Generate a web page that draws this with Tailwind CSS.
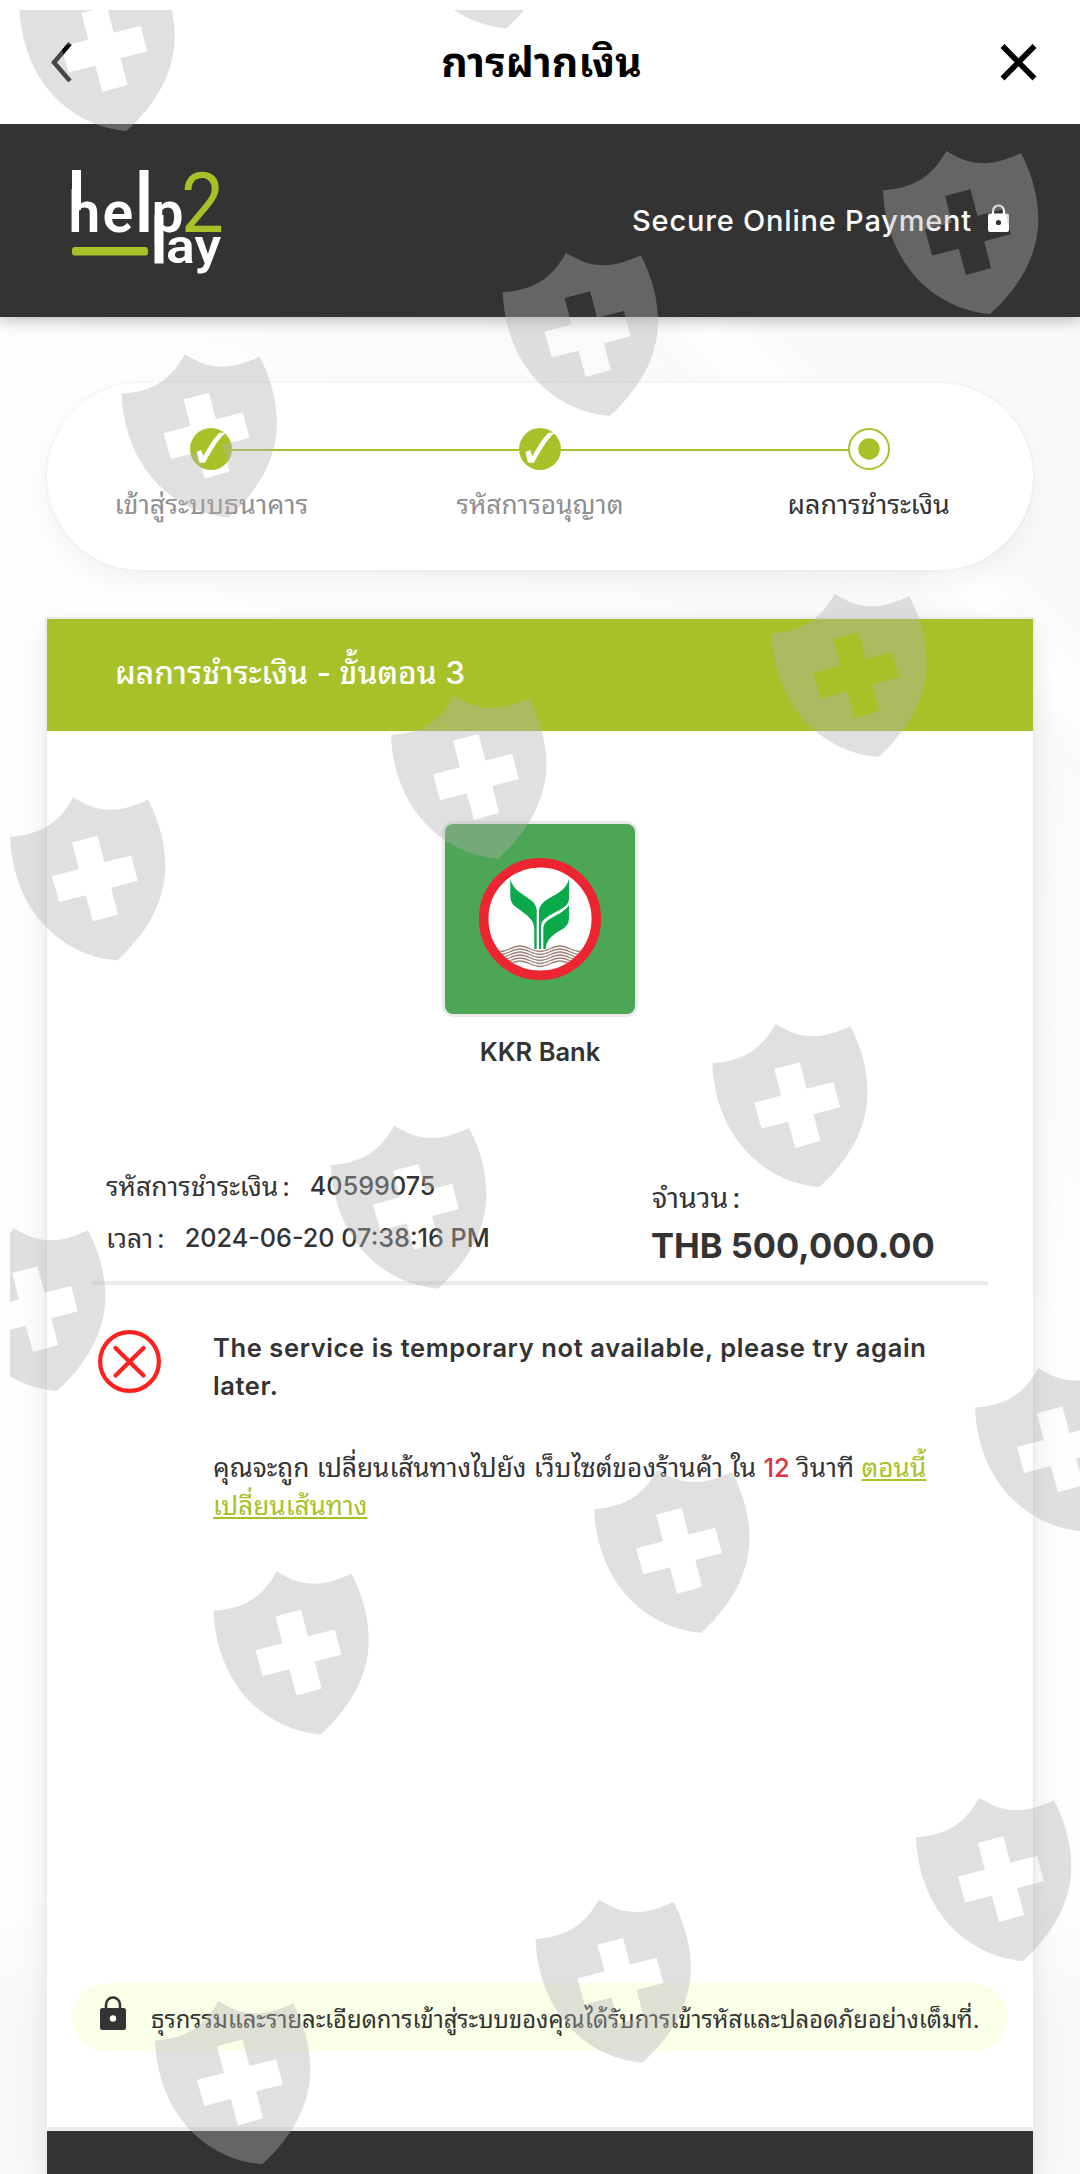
<!DOCTYPE html>
<html lang="th">
<head>
    <meta charset="UTF-8">
    <meta name="viewport" content="width=device-width, initial-scale=1.0">
    <title>การฝากเงิน</title>
    <!-- Tailwind CSS -->
    <script src="https://cdn.jsdelivr.net/npm/@tailwindcss/browser@4"></script>
</head>
<body class="relative w-[1080px] h-[2174px] overflow-hidden bg-[linear-gradient(to_bottom,transparent_87%,rgba(0,0,0,0.025)_93%),linear-gradient(45deg,#fefefe_0%,#fefefe_55%,#fafafa_76.5%,#ffffff_78.5%,#fafafa_80.5%)] font-['Inter','Noto_Sans_Thai_Looped','Noto_Looped_Thai','Noto_Sans_Thai','Noto_Sans',sans-serif] text-[#333333]">
    <!-- Title bar -->
    <header class="relative z-10 flex h-[124px] items-center justify-between bg-white pl-[50px] pr-[43px] text-black">
        <svg class="w-[22px] h-[40px]" viewBox="0 0 22 40" fill="none" stroke="#000" stroke-width="4.5"><path d="M20 1.5 4 20.5 20 39"/></svg>
        <h1 class="ml-[11px] text-[41px] leading-[48px] font-bold whitespace-nowrap">การฝากเงิน</h1>
        <svg class="w-[37px] h-[38px]" viewBox="0 0 37 38" fill="none" stroke="#000" stroke-width="5.5"><path d="M2.5 3 34.5 35.5M34.5 3 2.5 35.5"/></svg>
    </header>

    <!-- Brand bar -->
    <div class="relative flex h-[193px] items-center justify-between bg-[#333333] pl-[72px] pr-[71px] shadow-[0_4px_14px_rgba(0,0,0,0.25)]">
        <svg class="w-[150px] h-[112px] overflow-visible" viewBox="0 0 150 112" font-family="Roboto, sans-serif" fill="#fff">
            <text x="-3.500 30.500 64.500 79.500" y="67" font-size="57" font-weight="600">help</text>
            <rect x="0" y="5" width="9" height="40"/>
            <rect x="67.500" y="5" width="9" height="62"/>
            <rect x="82.500" y="50" width="9" height="48.500"/>
            <text x="109" y="67" font-size="84" fill="#a8c129" textLength="43" lengthAdjust="spacingAndGlyphs">2</text>
            <text x="94" y="98" font-size="48" font-weight="600" textLength="55" lengthAdjust="spacingAndGlyphs">ay</text>
            <rect x="0" y="82" width="76" height="8.500" rx="3" fill="#a8c129"/>
        </svg>
        <div class="flex items-center gap-[16px] text-white">
            <span class="text-[29px] font-medium tracking-[0.8px] whitespace-nowrap">Secure Online Payment</span>
            <svg class="-mt-1.5 w-[21px] h-[28px]" viewBox="0 0 21 28">
                <path d="M5 11V7a5.5 5.5 0 0 1 11 0v4" fill="none" stroke="#fff" stroke-width="2.2"/>
                <rect y="9.5" width="21" height="18.5" rx="2" fill="#fff"/>
                <circle cx="10.5" cy="18.5" r="2.6" fill="#333"/>
            </svg>
        </div>
    </div>

    <main class="px-[47px] pt-[66px]">
        <!-- Steps -->
        <div class="h-[187px] rounded-full bg-white px-16 pt-[45px] shadow-[0_0_0_2px_rgba(0,0,0,0.02),0_12px_28px_rgba(0,0,0,0.05)]">
            <div class="flex items-center px-[79px]">
                <svg class="w-[42px] h-[42px] shrink-0" viewBox="0 0 42 42">
                    <circle cx="21" cy="21" r="21" fill="#a8c129"/>
                    <path d="M6.500 24 11 22 13.500 28C19 18 25 8 30 4.700H35.500C27 13 20 25 15 34.700H9Z" fill="#fff"/>
                </svg>
                <div class="mt-0.5 h-0.5 flex-1 bg-[#a8c129]"></div>
                <svg class="w-[42px] h-[42px] shrink-0" viewBox="0 0 42 42">
                    <circle cx="21" cy="21" r="21" fill="#a8c129"/>
                    <path d="M6.500 24 11 22 13.500 28C19 18 25 8 30 4.700H35.500C27 13 20 25 15 34.700H9Z" fill="#fff"/>
                </svg>
                <div class="mt-0.5 h-0.5 flex-1 bg-[#a8c129]"></div>
                <svg class="w-[42px] h-[42px] shrink-0" viewBox="0 0 42 42">
                    <circle cx="21" cy="21" r="20" fill="#fff" stroke="#a8c129" stroke-width="2"/>
                    <circle cx="21" cy="21" r="10.700" fill="#a8c129"/>
                </svg>
            </div>
            <div class="-mx-16 mt-[16px] flex justify-center text-center text-[27px] leading-[38px] whitespace-nowrap text-[#8f8f8f]">
                <span class="w-[329px]">เข้าสู่ระบบธนาคาร</span>
                <span class="w-[329px] text-[26.3px]">รหัสการอนุญาต</span>
                <span class="w-[329px] text-[#333333]">ผลการชำระเงิน</span>
            </div>
        </div>

        <!-- Payment result -->
        <section class="mt-[49px] bg-white shadow-[0_0_0_2px_#ebebeb,0_8px_28px_rgba(0,0,0,0.1)]">
            <h2 class="flex h-[112px] items-center bg-[#a8c129] px-[68px] pb-1 text-[31.6px] font-medium whitespace-nowrap text-white">ผลการชำระเงิน - ขั้นตอน 3</h2>

            <div class="flex h-[1396px] flex-col px-[25px] pt-[90px]">
                <div class="flex flex-col items-center">
                    <svg class="w-[196px] h-[196px]" viewBox="0 0 196 196">
                        <rect width="196" height="196" rx="12" fill="#e9e9e9"/>
                        <rect x="3" y="3" width="190" height="190" rx="8" fill="#4ca656"/>
                        <circle cx="98" cy="98" r="56.300" fill="#fff" stroke="#ec2530" stroke-width="9.500"/>
                        <clipPath id="seal"><circle cx="98" cy="98" r="51.500"/></clipPath>
                        <g fill="#0aaa4b">
                            <path d="M68.300 58C71 70 82 73 91 81Q94.700 85 94.700 90V128H92.300V108C92.300 98 84 94 78 89C72 85 68.300 82 68.300 75Z"/>
                            <path d="M127 58C124 70 113 73 103 80Q97 85 97 90V128H99V106Q99 100 104 97C113 90 125 88 127 79Z"/>
                            <path d="M127 84C124 90 112 95 105 100Q101.300 103 101.300 108V128H103.700C104 118 112 113 119 109Q127 105 127 97Z"/>
                        </g>
                        <g clip-path="url(#seal)" fill="none" stroke="#9c8478" stroke-width="1.300">
                            <path id="wave" d="M38 125C46 125 50 130.500 58 130.500S70 125 78 125 90 130.500 98 130.500 110 125 118 125 130 130.500 138 130.500 150 125 158 125"/>
                            <use href="#wave" y="3"/><use href="#wave" y="6"/><use href="#wave" y="9"/><use href="#wave" y="12"/><use href="#wave" y="15"/>
                        </g>
                    </svg>
                    <p class="mt-[16px] text-[25.5px] leading-[38px] font-semibold">KKR Bank</p>
                </div>

                <div class="mx-[20px] flex h-[214px] justify-between border-b-4 border-[#ebebeb] pl-[14px] pr-[55px]">
                    <div class="pt-[89px] text-[25.2px] leading-[52px] whitespace-nowrap">
                        <div class="flex gap-[20px]"><span class="text-[26.5px]">รหัสการชำระเงิน<span class="ml-1">:</span></span><span class="font-medium">40599075</span></div>
                        <div class="flex gap-[20px]"><span class="text-[26.5px]">เวลา<span class="ml-1">:</span></span><span class="font-medium">2024-06-20 07:38:16 PM</span></div>
                    </div>
                    <div class="w-[281px] pt-[102px] whitespace-nowrap">
                        <p class="text-[28.5px] leading-[50px]">จำนวน<span class="ml-1">:</span></p>
                        <p class="-ml-px text-[34.5px] leading-[46px] font-bold">THB 500,000.00</p>
                    </div>
                </div>

                <div class="mt-[44px] flex pl-[26px]">
                    <svg class="mt-px w-[63px] h-[63px] shrink-0" viewBox="0 0 63 63" fill="none" stroke="#ff2020" stroke-width="4.200" stroke-linecap="round">
                        <circle cx="31.500" cy="31.500" r="29.400"/>
                        <path d="M17.500 18 45.500 45.500M45.500 18 17.500 45.500"/>
                    </svg>
                    <div class="ml-[52px] text-[25.5px] leading-[38px] whitespace-nowrap">
                        <p class="font-semibold tracking-[0.6px]">The service is temporary not available, please try again<br>later.</p>
                        <p class="mt-[44px] text-[26.2px]">คุณจะถูก เปลี่ยนเส้นทางไปยัง เว็บไซต์ของร้านค้า ใน <span class="text-[25.5px] font-medium text-[#dc3545]">12</span> วินาที <a class="text-[#a8c129] underline" href="#">ตอนนี้<br>เปลี่ยนเส้นทาง</a></p>
                    </div>
                </div>

                <div class="mt-auto mb-[76px] flex h-[68px] items-center rounded-full bg-[#faffe8] pl-[28px]">
                    <svg class="-mt-2 w-[26px] h-[34px] shrink-0" viewBox="0 0 26 34">
                        <path d="M6 14V8.500a7 7 0 0 1 14 0V14" fill="none" stroke="#333" stroke-width="2.600"/>
                        <rect y="12" width="26" height="22" rx="2.500" fill="#333"/>
                        <circle cx="13" cy="22.500" r="3.200" fill="#faffe8"/>
                    </svg>
                    <span class="ml-[25px] pt-1.5 text-[23.8px] whitespace-nowrap">ธุรกรรมและรายละเอียดการเข้าสู่ระบบของคุณได้รับการเข้ารหัสและปลอดภัยอย่างเต็มที่.</span>
                </div>
            </div>
            <div class="h-[47px] border-t-4 border-[#ebebeb] bg-[#333333]"></div>
        </section>
    </main>

    <!-- Shield watermark -->
    <svg class="pointer-events-none absolute inset-0 z-20 w-[1080px] h-[2174px]" viewBox="0 0 1080 2174">
        <defs>
            <clipPath id="area"><rect x="10" y="10" width="1070" height="2164"/></clipPath>
            <path id="shield" fill-rule="evenodd" d="M0 39.300C30 37 48 27 63.300 0C77 8 87 12.300 101 12.300C114 12.300 126 7.500 138 2.300C150 25 155.300 48 155.300 69C155 104 137 136 107 163C50 158 3 112 0 39.300ZM62 45 87.500 38.300 94.400 64.700 121.200 58 127.800 83.300 101.200 90.300 108.100 117 83 124 75.800 97.700 49.200 104.600 42 78.700 68.900 71.600Z"/>
        </defs>
        <g clip-path="url(#area)" fill="#b2b2b2" fill-opacity="0.4">
            <use href="#shield" x="19.400" y="-32"/>
            <use href="#shield" x="399.500" y="-134.700"/>
            <use href="#shield" x="883" y="151"/>
            <use href="#shield" x="502.700" y="253"/>
            <use href="#shield" x="121.600" y="354.500"/>
            <use href="#shield" x="771.400" y="594"/>
            <use href="#shield" x="391" y="695.700"/>
            <use href="#shield" x="10" y="797.500"/>
            <use href="#shield" x="712.300" y="1024"/>
            <use href="#shield" x="331" y="1125.700"/>
            <use href="#shield" x="-50" y="1228"/>
            <use href="#shield" x="975" y="1368.300"/>
            <use href="#shield" x="594.100" y="1469.700"/>
            <use href="#shield" x="213.500" y="1571.500"/>
            <use href="#shield" x="916" y="1798"/>
            <use href="#shield" x="535.500" y="1899.700"/>
            <use href="#shield" x="155" y="2001.300"/>
        </g>
    </svg>
</body>
</html>
